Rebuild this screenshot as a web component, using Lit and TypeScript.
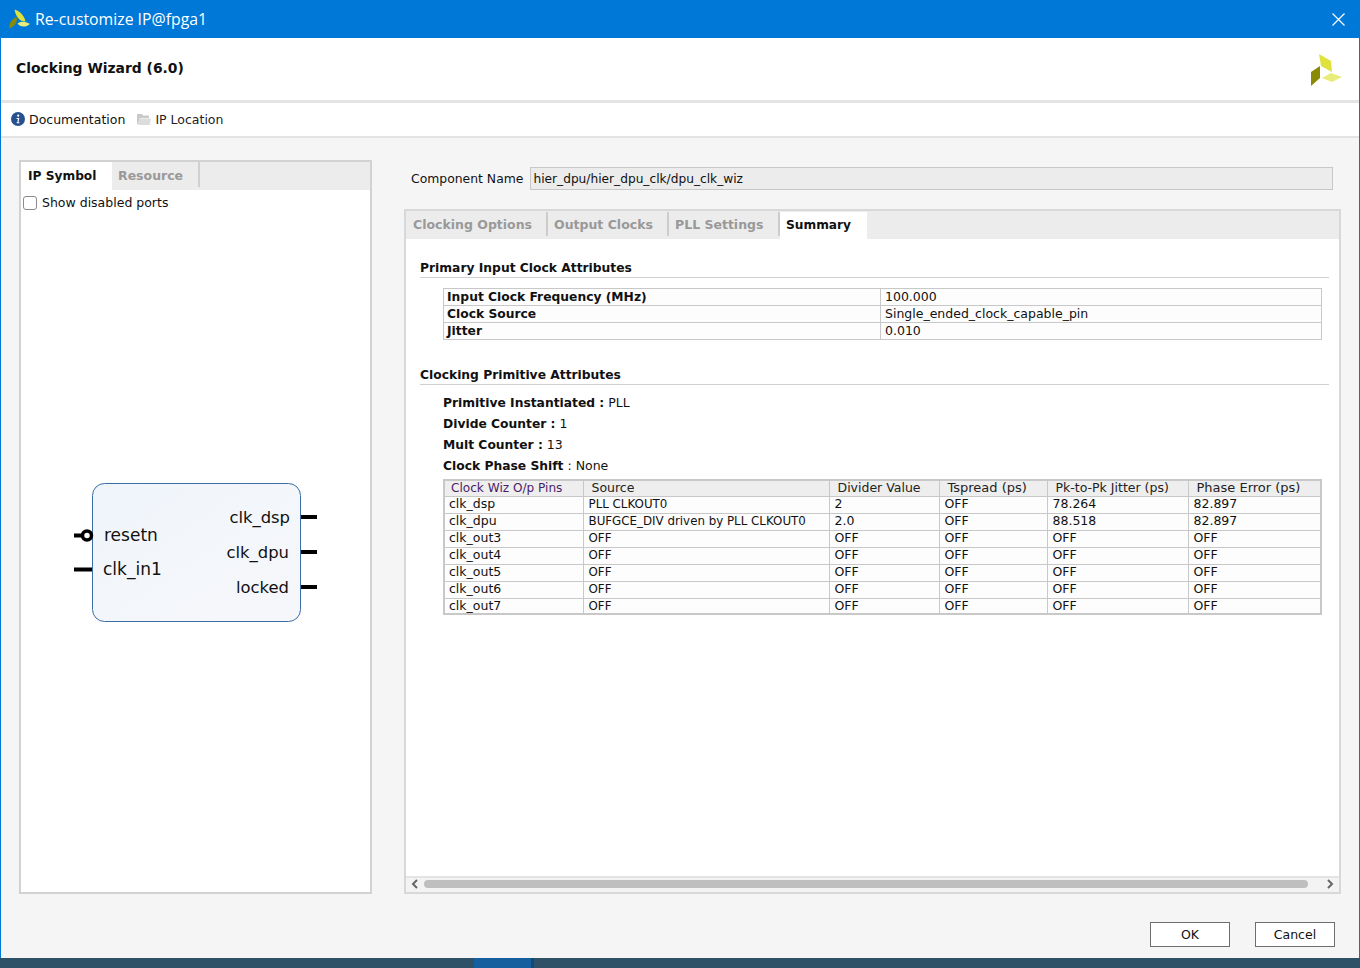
import { LitElement, html, css, svg } from "lit";
import { customElement } from "lit/decorators.js";

const logo = svg`<svg width="32" height="32" viewBox="0 0 32 32">
  <polygon points="8,0 20,7 21,18 10,12" fill="#dfe23c"/>
  <polygon points="0,18 9,12 9,24 0,32" fill="#8a8a05"/>
  <polygon points="11,24 20,19 31,23 21,28" fill="#e8ec78"/>
</svg>`;

const leaf = svg`<svg width="22" height="21" viewBox="0 0 22 21">
  <path d="M5.5 .5C11 2 15.5 7 16.5 12.5 10.5 12.5 7 8 5.5 .5z" fill="#dfe23c"/>
  <path d="M.5 19.5C-.5 14 3.5 9.5 7.5 8 9 13 5.5 17.5 .5 19.5z" fill="#8a8a05"/>
  <path d="M8.5 14.5C12 11.5 18 12.5 21 15 17 18.5 11 18.5 8.5 14.5z" fill="#e8ec78"/>
</svg>`;

const rows = [
  ["clk_dsp", "PLL CLKOUT0", "2", "OFF", "78.264", "82.897"],
  ["clk_dpu", "BUFGCE_DIV driven by PLL CLKOUT0", "2.0", "OFF", "88.518", "82.897"],
  ...["clk_out3", "clk_out4", "clk_out5", "clk_out6", "clk_out7"].map((n) => [n, "OFF", "OFF", "OFF", "OFF", "OFF"]),
];

@customElement("app-root")
export class AppRoot extends LitElement {
  static styles = css`
    :host { display: block; width: 1360px; height: 968px; overflow: hidden; font-family: "DejaVu Sans", sans-serif; font-size: 12px; color: #111; background: #f5f5f5; position: relative; }
    * { box-sizing: border-box; }
    .win { height: 958px; display: flex; flex-direction: column; border-left: 1px solid #0078d7; border-right: 1px solid #0078d7; }
    .title { height: 38px; flex: none; margin: 0 -1px; background: #0078d7; color: #fff; display: flex; align-items: center; padding: 0 15px 0 9px; font-family: "Segoe UI", "Open Sans", sans-serif; font-size: 15.8px; gap: 4px; }
    .title .t { flex: 1; }
    .head { height: 62px; flex: none; background: #fff; display: flex; align-items: center; justify-content: space-between; padding: 0 16px 2px 15px; font-weight: 700; font-size: 13.9px; }
    .head svg { margin-top: 3px; }
    .sep { height: 3px; flex: none; background: #e4e4e4; }
    .tools { height: 33px; flex: none; background: #fff; display: flex; align-items: center; padding: 0 0 1px 10px; font-size: 12.5px; gap: 12px; }
    .tool { display: flex; align-items: center; gap: 4px; }
    .tool.loc { color: #222; gap: 4px; }
    .sep2 { height: 2px; flex: none; background: #e4e4e4; }
    .body { flex: 1; display: flex; padding: 22px 18px 64px 18px; gap: 32px; min-height: 0; }
    .left { width: 353px; flex: none; border: 2px solid #d2d2d2; background: #fff; display: flex; flex-direction: column; }
    .tabs { display: flex; background: #ececec; flex: none; height: 28px; }
    .tab { font-weight: 700; font-size: 12.2px; color: #999; display: flex; align-items: center; padding: 0 0 2px 7px; position: relative; }
    .tab.on { background: #fff; color: #111; width: 91px; padding-bottom: 0; }
    .tab.res { width: 88px; padding-left: 6px; font-size: 12.5px; }
    .tab.res::after { content: ""; position: absolute; right: 0; top: 0; bottom: 3px; width: 2px; background: #d0d0d0; }
    .chk { display: flex; align-items: center; gap: 5px; padding: 1px 0 0 2px; font-size: 12.5px; height: 24px; }
    .box { width: 14px; height: 14px; border: 1px solid #8a8a8a; border-radius: 3px; background: #fff; }
    .sym { margin: 268px 0 0 51px; display: block; }
    .sym text { font-family: "DejaVu Sans", sans-serif; font-size: 17px; fill: #111; }
    .sym text.r { font-size: 16.4px; text-anchor: end; }
    .right { flex: 1; min-width: 0; display: flex; flex-direction: column; }
    .name { display: flex; align-items: center; height: 23px; margin: 7px 8px 0 7px; font-size: 12.4px; gap: 7px; }
    .name .inp { flex: 1; height: 23px; background: #ececec; border: 1px solid #c8c8c8; display: flex; align-items: center; padding-left: 2px; font-size: 12.2px; }
    .panel { flex: 1; margin-top: 19px; border: 2px solid #d8d8d8; background: #fff; display: flex; flex-direction: column; min-height: 0; }
    .ptabs { display: flex; height: 28px; background: #ececec; flex: none; }
    .ptab { font-weight: 700; font-size: 12.5px; color: #999; display: flex; align-items: center; padding-left: 6px; border-right: 2px solid #ccc; height: 24px; margin-top: 1px; }
    .ptab.on { background: #fff; color: #111; font-size: 12.2px; border: 0; height: 27px; margin-top: 1px; padding: 0 0 1px 6px; width: 87px; }
    .ptab.a { width: 142px; padding-left: 7px; }
    .ptab.b { width: 121px; }
    .ptab.c { width: 111px; }
    .content { flex: 1; padding: 21px 10px 0 14px; min-height: 0; }
    h3 { margin: 0; font-size: 12.3px; font-weight: 700; height: 18px; line-height: 17px; border-bottom: 1px solid #d0d0d0; }
    .t1 { margin: 10px 0 0 23px; width: 879px; border-collapse: collapse; table-layout: fixed; }
    .t1 td { border: 1px solid #c8c8c8; height: 17px; padding: 0 4px 1px; line-height: 14px; white-space: nowrap; background: #fdfdfd; font-size: 12.5px; }
    .t1 td.b { font-weight: 700; font-size: 12.3px; padding-left: 3px; }
    h3.second { margin-top: 27px; }
    .kv { margin: 7px 0 0 23px; height: 21px; line-height: 21px; font-size: 12.5px; }
    .kv b { font-size: 12.3px; }
    .kv + .kv { margin-top: 0; }
    .t2 { margin: 3px 0 0 23px; width: 879px; border-collapse: collapse; table-layout: fixed; border: 2px solid #c8c8c8; }
    .t2 th { background: #eeeeee; font-weight: 400; text-align: left; height: 15px; padding: 0 0 1px 8px; line-height: 14px; font-size: 12.5px; color: #222; border: 1px solid #c8c8c8; white-space: nowrap; }
    .t2 th:first-child { color: #4a1d6a; font-size: 12.1px; padding-left: 6px; }
    .t2 th:nth-child(4), .t2 th:nth-child(6) { font-size: 13px; }
    .t2 td { height: 17px; padding: 0 4px 2px 5px; line-height: 14px; font-size: 12.5px; border: 1px solid #c8c8c8; background: #fdfdfd; white-space: nowrap; }
    .t2 td:first-child { padding-left: 4px; }
    .t2 td:nth-child(2) { font-size: 11.85px; }
    .t2 tr:last-child td { height: 15px; padding-bottom: 0; }
    .sb { height: 16px; flex: none; background: #f3f3f3; border-top: 2px solid #e4e4e4; display: flex; align-items: center; padding: 0 5px 2px; gap: 4px; }
    .thumb { flex: 1; height: 8px; border-radius: 4px; background: #bfbfbf; margin: 0 14px 0 1px; }
    .foot { position: absolute; top: 922px; left: 1150px; display: flex; gap: 25px; }
    .btn { width: 80px; height: 25px; border: 1px solid #6e6e6e; background: #fff; display: flex; align-items: center; justify-content: center; font-size: 12.5px; }
    .task { height: 10px; background: #2f5168; display: flex; padding-left: 474px; }
    .task i { width: 60px; background: #155f9e; border-right: 3px solid #0e4a7a; }
  `;

  render() {
    return html`
      <div class="win">
        <div class="title">
          ${leaf}<span class="t">Re-customize IP@fpga1</span>
          <svg width="13" height="13" viewBox="0 0 13 13"><path d="M.5.5l12 12M12.5.5l-12 12" stroke="#fff" stroke-width="1.2" fill="none"/></svg>
        </div>
        <div class="head"><span>Clocking Wizard (6.0)</span>${logo}</div>
        <div class="sep"></div>
        <div class="tools">
          <span class="tool"><svg width="14" height="14" viewBox="0 0 14 14"><circle cx="7" cy="7" r="7" fill="#27508f"/><path d="M7.2 2.6a1.1 1.1 0 1 1-.01 2.2 1.1 1.1 0 0 1 .01-2.2zM5.6 6h2.7l-.8 4.2h.9v1H5.7v-1h.7l.5-3.2h-1.3z" fill="#fff"/></svg>Documentation</span>
          <span class="tool loc"><svg width="14" height="12" viewBox="0 0 14 12"><path d="M0 1h5l1 1.5h6V5H3L1 11H0z" fill="#c9c9c9"/><path d="M2.5 5.5H14L12.5 12H1z" fill="#dcdcdc"/></svg>IP Location</span>
        </div>
        <div class="sep2"></div>
        <div class="body">
          <div class="left">
            <div class="tabs">
              <div class="tab on">IP Symbol</div>
              <div class="tab res">Resource</div>
            </div>
            <div class="chk"><span class="box"></span>Show disabled ports</div>
            <svg class="sym" width="250" height="145" viewBox="0 0 250 145">
              <defs><linearGradient id="g" x1="0" y1="0" x2="1" y2="1"><stop offset="0" stop-color="#f0f5fb"/><stop offset="1" stop-color="#f6f7fa"/></linearGradient></defs>
              <rect x="20.5" y="1.5" width="208" height="138" rx="12" fill="url(#g)" stroke="#3b6ea5"/>
              <path d="M2 53.5h10M2 87.5h18M229 35h16M229 70h16M229 105h16" stroke="#000" stroke-width="4"/>
              <circle cx="15" cy="53.5" r="4.5" fill="#fff" stroke="#000" stroke-width="3.5"/>
              <text x="32" y="59">resetn</text>
              <text x="31" y="93">clk_in1</text>
              <text class="r" x="218" y="41">clk_dsp</text>
              <text class="r" x="217" y="76">clk_dpu</text>
              <text class="r" x="217" y="111">locked</text>
            </svg>
          </div>
          <div class="right">
            <div class="name"><span>Component Name</span><div class="inp">hier_dpu/hier_dpu_clk/dpu_clk_wiz</div></div>
            <div class="panel">
              <div class="ptabs">
                <div class="ptab a">Clocking Options</div>
                <div class="ptab b">Output Clocks</div>
                <div class="ptab c">PLL Settings</div>
                <div class="ptab on">Summary</div>
              </div>
              <div class="content">
                <h3>Primary Input Clock Attributes</h3>
                <table class="t1">
                  <colgroup><col style="width:437px" /><col /></colgroup>
                  <tr><td class="b">Input Clock Frequency (MHz)</td><td>100.000</td></tr>
                  <tr><td class="b">Clock Source</td><td>Single_ended_clock_capable_pin</td></tr>
                  <tr><td class="b">Jitter</td><td>0.010</td></tr>
                </table>
                <h3 class="second">Clocking Primitive Attributes</h3>
                <div class="kv"><b>Primitive Instantiated :</b> PLL</div>
                <div class="kv"><b>Divide Counter :</b> 1</div>
                <div class="kv"><b>Mult Counter :</b> 13</div>
                <div class="kv"><b>Clock Phase Shift</b> : None</div>
                <table class="t2">
                  <colgroup><col style="width:139px" /><col style="width:246px" /><col style="width:110px" /><col style="width:108px" /><col style="width:141px" /><col /></colgroup>
                  <tr><th>Clock Wiz O/p Pins</th><th>Source</th><th>Divider Value</th><th>Tspread (ps)</th><th>Pk-to-Pk Jitter (ps)</th><th>Phase Error (ps)</th></tr>
                  ${rows.map((r) => html`<tr>${r.map((c) => html`<td>${c}</td>`)}</tr>`)}
                </table>
              </div>
              <div class="sb">
                <svg width="8" height="10" viewBox="0 0 8 10"><path d="M6 1L2 5l4 4" stroke="#666" stroke-width="2" fill="none"/></svg>
                <div class="thumb"></div>
                <svg width="8" height="10" viewBox="0 0 8 10"><path d="M2 1l4 4-4 4" stroke="#666" stroke-width="2" fill="none"/></svg>
              </div>
            </div>
          </div>
        </div>
      </div>
      <div class="foot"><div class="btn">OK</div><div class="btn">Cancel</div></div>
      <div class="task"><i></i></div>
    `;
  }
}
